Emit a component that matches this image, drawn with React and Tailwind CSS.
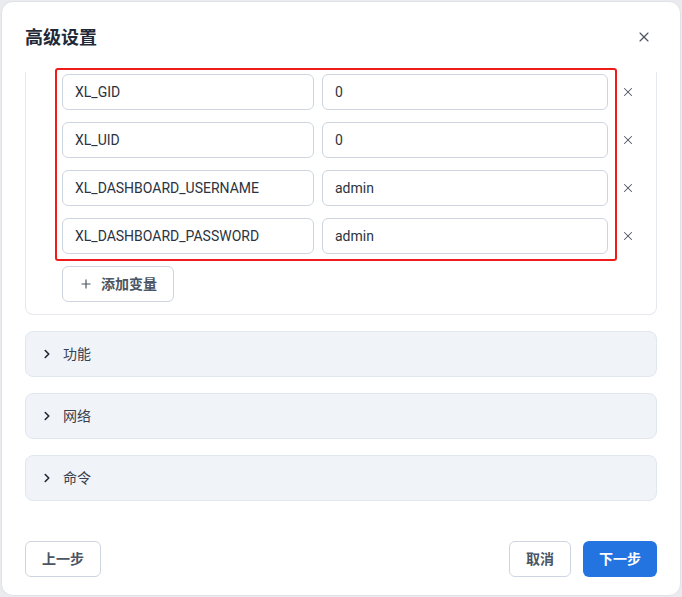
import React from 'react';
import { ChevronRight, Plus, X } from 'lucide-react';

const vars = [
    { key: 'XL_GID', value: '0' },
    { key: 'XL_UID', value: '0' },
    { key: 'XL_DASHBOARD_USERNAME', value: 'admin' },
    { key: 'XL_DASHBOARD_PASSWORD', value: 'admin' },
];

const sections = ['功能', '网络', '命令'];

const font = { fontFamily: 'Roboto, "Noto Sans CJK SC", sans-serif' };

export default function App() {
    return (
        <div className="w-[682px] h-[597px] bg-[#e9ebef] p-px" style={font}>
            <div className="relative h-[595px] bg-white rounded-xl border border-[#dfe3e8] flex flex-col overflow-hidden">
                {/* Header */}
                <div className="h-[70px] shrink-0 flex items-center justify-between pl-[23px] pr-[28px]">
                    <h2 className="text-[18px] font-bold text-[#1f2937]">高级设置</h2>
                    <button className="text-[#4b5563]">
                        <X size={16} strokeWidth={1.75} />
                    </button>
                </div>

                {/* Scrolled body */}
                <div className="flex-1 overflow-hidden px-[23px]">
                    <div className="border border-[#e5e8ee] rounded-b-lg border-t-0 pl-9 pr-4 pt-[2px] pb-3">
                        <div className="flex flex-col gap-3">
                            {vars.map((v) => (
                                <div key={v.key} className="flex items-center">
                                    <div className="w-[252px] h-9 rounded-md border border-[#cdd5e0] flex items-center px-3 text-[14px] text-[#2b3340]">
                                        {v.key}
                                    </div>
                                    <div className="ml-2 w-[286px] h-9 rounded-md border border-[#cdd5e0] flex items-center px-3 text-[14px] text-[#2b3340]">
                                        {v.value}
                                    </div>
                                    <button className="ml-[13px] text-[#4b5563]">
                                        <X size={14} strokeWidth={1.75} />
                                    </button>
                                </div>
                            ))}
                        </div>
                        <button className="mt-3 h-9 w-[112px] rounded-md border border-[#cdd5e0] flex items-center justify-center gap-2 text-[14px] font-semibold text-[#4b5563]">
                            <Plus size={14} strokeWidth={2} />
                            添加变量
                        </button>
                    </div>

                    <div className="mt-4 flex flex-col gap-4">
                        {sections.map((s) => (
                            <div key={s} className="h-[46px] rounded-lg bg-[#f0f3f8] border border-[#e2e7ef] flex items-center pl-[14px] gap-[9px] text-[14px] text-[#374151]">
                                <ChevronRight size={14} strokeWidth={2.75} className="text-[#1f2937]" />
                                {s}
                            </div>
                        ))}
                    </div>
                </div>

                {/* Footer */}
                <div className="shrink-0 flex items-center justify-between px-[23px] pb-[18px]">
                    <button className="h-9 w-[76px] rounded-md border border-[#cdd5e0] text-[14px] font-semibold text-[#4b5563]">
                        上一步
                    </button>
                    <div className="flex gap-3">
                        <button className="h-9 w-[62px] rounded-md border border-[#cdd5e0] text-[14px] font-semibold text-[#4b5563]">
                            取消
                        </button>
                        <button className="h-9 w-[74px] rounded-md bg-[#2374e1] text-[14px] font-bold text-white">
                            下一步
                        </button>
                    </div>
                </div>

                {/* Highlight overlay */}
                <div className="absolute left-[53px] top-[66px] w-[562px] h-[193px] border-2 border-[#f01b1b] rounded-[3px] pointer-events-none" />
            </div>
        </div>
    );
}
